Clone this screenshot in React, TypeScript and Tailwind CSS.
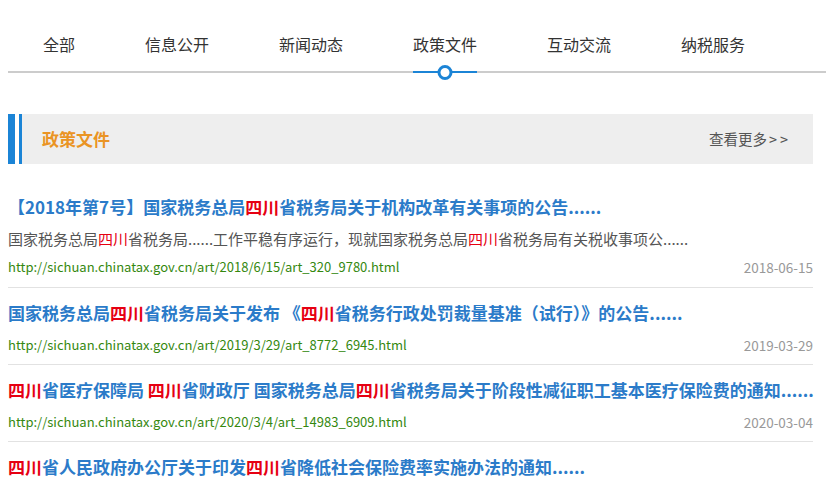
import type { ReactNode } from "react";

const tabs = ["全部", "信息公开", "新闻动态", "政策文件", "互动交流", "纳税服务"];
const activeTab = "政策文件";

type Item = {
  title: string;
  desc?: string;
  url: string;
  date: string;
};

const items: Item[] = [
  {
    title: "【2018年第7号】国家税务总局四川省税务局关于机构改革有关事项的公告......",
    desc: "国家税务总局四川省税务局......工作平稳有序运行，现就国家税务总局四川省税务局有关税收事项公......",
    url: "http://sichuan.chinatax.gov.cn/art/2018/6/15/art_320_9780.html",
    date: "2018-06-15",
  },
  {
    title: "国家税务总局四川省税务局关于发布 《四川省税务行政处罚裁量基准（试行）》的公告......",
    url: "http://sichuan.chinatax.gov.cn/art/2019/3/29/art_8772_6945.html",
    date: "2019-03-29",
  },
  {
    title: "四川省医疗保障局 四川省财政厅 国家税务总局四川省税务局关于阶段性减征职工基本医疗保险费的通知......",
    url: "http://sichuan.chinatax.gov.cn/art/2020/3/4/art_14983_6909.html",
    date: "2020-03-04",
  },
  {
    title: "四川省人民政府办公厅关于印发四川省降低社会保险费率实施办法的通知......",
    url: "http://sichuan.chinatax.gov.cn/art/2020/3/4/art_14983_6908.html",
    date: "2020-03-04",
  },
];

// Highlight the search keyword in red, like the site's result list does.
function Hl({ text }: { text: string }): ReactNode {
  const parts = text.split("四川");
  return parts.map((p, i) => (
    <span key={i}>
      {p}
      {i < parts.length - 1 ? <span className="text-[#e60012]">四川</span> : null}
    </span>
  ));
}

function Tabs() {
  return (
    <div className="ml-2 flex border-b-2 border-[#cccccc] pt-8">
      {tabs.map((t) => (
        <div key={t} className="px-[35px]">
          <div className="relative pb-[15px] text-[16px] leading-6 text-[#333333]">
            {t}
            {t === activeTab ? (
              <>
                <div className="absolute -bottom-[2px] left-0 right-0 h-[2px] bg-[#1b84d6]" />
                <div className="absolute -bottom-[8.5px] left-1/2 h-[15px] w-[15px] -translate-x-1/2 rounded-full border-[3px] border-[#1b84d6] bg-white" />
              </>
            ) : null}
          </div>
        </div>
      ))}
    </div>
  );
}

function SectionHead() {
  return (
    <div className="mx-2 mt-[41px] flex h-[50px] w-[805px] items-stretch">
      <div className="w-[7px] bg-[#1b84d6]" />
      <div className="w-[4px] bg-white" />
      <div className="w-[3px] bg-[#1b84d6]" />
      <div className="flex flex-1 items-center justify-between bg-[#eeeeee] pl-5 pr-[22px]">
        <span className="text-[17px] font-bold text-[#ea9424]">政策文件</span>
        <span className="text-[14.5px] text-[#555555]">
          查看更多<span className="ml-[2px] tracking-[3px]">&gt;&gt;</span>
        </span>
      </div>
    </div>
  );
}

export default function App() {
  return (
    <div
      className="h-[491px] w-[826px] overflow-hidden bg-white"
      style={{ fontFamily: '"Noto Sans CJK SC", "Noto Sans", sans-serif' }}
    >
      <Tabs />
      <SectionHead />
      <ul className="mx-2 mt-[31px] w-[805px]">
        {items.map((it, i) => (
          <li key={i} className={i === 0 ? "pb-[10px]" : "border-t border-[#e2e2e2] pt-[13px] pb-[9px]"}>
            <div className="whitespace-nowrap text-[17px] font-bold leading-6 text-[#2b7bc9]">
              <Hl text={it.title} />
            </div>
            {it.desc ? (
              <div className="mt-[9px] whitespace-nowrap text-[15px] leading-[22px] text-[#555555]">
                <Hl text={it.desc} />
              </div>
            ) : null}
            <div className={`${it.desc ? "mt-[7px]" : "mt-[10px]"} flex items-center justify-between text-[13px] leading-5`}>
              <span className="text-[#35880f]">{it.url}</span>
              <span className="text-[13.5px] text-[#999999]">{it.date}</span>
            </div>
          </li>
        ))}
      </ul>
    </div>
  );
}
